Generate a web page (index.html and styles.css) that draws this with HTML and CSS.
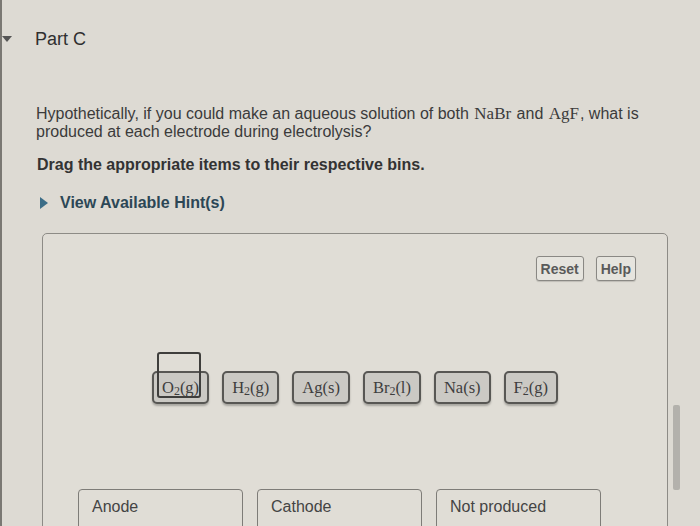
FILE: index.html
```html
<!DOCTYPE html>
<html lang="en">
<head>
  <meta charset="UTF-8">
  <title>Part C</title>
  <link rel="stylesheet" href="styles.css">
</head>
<body>
  <div class="page">
    <main class="content">
      <div class="part-head">
        <span class="caret-down"></span>
        <h2>Part C</h2>
      </div>

      <p class="question">Hypothetically, if you could make an aqueous solution of both <span class="math">NaBr</span> and <span class="math">AgF</span>, what is produced at each electrode during electrolysis?</p>
      <p class="instructions">Drag the appropriate items to their respective bins.</p>

      <div class="hints">
        <span class="caret-right"></span>
        <span>View Available Hint(s)</span>
      </div>

      <div class="drag-box">
        <div class="toolbar">
          <button class="tool-btn">Reset</button>
          <button class="tool-btn">Help</button>
        </div>

        <div class="tiles">
          <div class="tile grabbed"><span>O<sub>2</sub>(g)</span><span class="grab-outline"></span></div>
          <div class="tile"><span>H<sub>2</sub>(g)</span></div>
          <div class="tile"><span>Ag(s)</span></div>
          <div class="tile"><span>Br<sub>2</sub>(l)</span></div>
          <div class="tile"><span>Na(s)</span></div>
          <div class="tile"><span>F<sub>2</sub>(g)</span></div>
        </div>

        <div class="bins">
          <div class="bin">Anode</div>
          <div class="bin">Cathode</div>
          <div class="bin">Not produced</div>
        </div>
      </div>
    </main>

    <div class="scroll-track">
      <div class="scroll-thumb"></div>
    </div>
  </div>
</body>
</html>
```

FILE: styles.css
```css
* {
  margin: 0;
  padding: 0;
  box-sizing: border-box;
}

body {
  font-family: 'Liberation Sans', Arial, sans-serif;
  background: #dddad3;
  color: #3a3a3a;
  height: 526px;
  overflow: hidden;
}

.page {
  display: flex;
  height: 100%;
}

.content {
  width: 668px;
  border-left: 2px solid #7a7873;
}

/* Part header */
.part-head {
  display: flex;
  align-items: center;
  height: 78px;
}

.caret-down {
  width: 0;
  height: 0;
  border-left: 5px solid transparent;
  border-right: 5px solid transparent;
  border-top: 6px solid #555;
  margin-right: 23px;
}

.part-head h2 {
  font-size: 18px;
  font-weight: normal;
  color: #2f2f2f;
}

.question {
  padding-left: 34px;
  padding-right: 4px;
  margin-top: 27px;
  font-size: 16px;
  line-height: 18px;
  color: #3b3b3b;
}

.math {
  font-family: 'Liberation Serif', 'Times New Roman', serif;
  font-size: 17px;
  line-height: 17px;
  margin: 0 1px;
}

.instructions {
  padding-left: 35px;
  margin-top: 15px;
  font-size: 16px;
  font-weight: bold;
  color: #333;
}

.hints {
  display: flex;
  align-items: center;
  gap: 12px;
  padding-left: 38px;
  margin-top: 20px;
  font-size: 16px;
  font-weight: bold;
  color: #2c4756;
}

.caret-right {
  width: 0;
  height: 0;
  border-top: 6px solid transparent;
  border-bottom: 6px solid transparent;
  border-left: 8px solid #3c6d87;
}

/* Drag and drop area */
.drag-box {
  margin: 21px 0 0 40px;
  height: 300px;
  background: #e0ddd6;
  border: 1.5px solid #8d8b86;
  border-radius: 5px;
  padding: 22px 31px 0 35px;
}

.toolbar {
  display: flex;
  justify-content: flex-end;
  gap: 12px;
}

.tool-btn {
  font-family: 'Liberation Sans', Arial, sans-serif;
  font-size: 14px;
  font-weight: bold;
  color: #5a5a5a;
  background: #e6e4de;
  border: 1.5px solid #8a8884;
  border-radius: 3px;
  height: 25px;
  padding: 0 4px;
  box-shadow: 0 1px 1px rgba(0, 0, 0, 0.15);
}

.tiles {
  display: flex;
  justify-content: center;
  gap: 13px;
  margin-top: 90px;
  padding-right: 4px;
}

.tile {
  position: relative;
  height: 33px;
  padding: 0 8px;
  display: flex;
  align-items: center;
  font-family: 'Liberation Serif', 'Times New Roman', serif;
  font-size: 16.5px;
  color: #3e3e3e;
  background: #cbc9c4;
  border: 2px solid #585754;
  border-radius: 5px;
  box-shadow: 0 2px 2px rgba(0, 0, 0, 0.25);
}

.tile sub {
  font-size: 12px;
  line-height: 0;
  vertical-align: -2px;
}

.grab-outline {
  position: absolute;
  left: 3px;
  top: -21px;
  width: 44px;
  height: 46px;
  border: 2px solid #3f3e3c;
  border-radius: 3px;
}

.bins {
  display: flex;
  gap: 14px;
  margin-top: 85px;
}

.bin {
  width: 165px;
  height: 60px;
  padding: 8px 13px;
  font-size: 16px;
  color: #444;
  border: 1.5px solid #7e7c78;
  border-radius: 4px;
}

/* Scrollbar */
.scroll-track {
  flex: 1;
  padding: 405px 0 0 5px;
}

.scroll-thumb {
  width: 7px;
  height: 85px;
  background: #b3b1ac;
  border-radius: 2px;
}
```
